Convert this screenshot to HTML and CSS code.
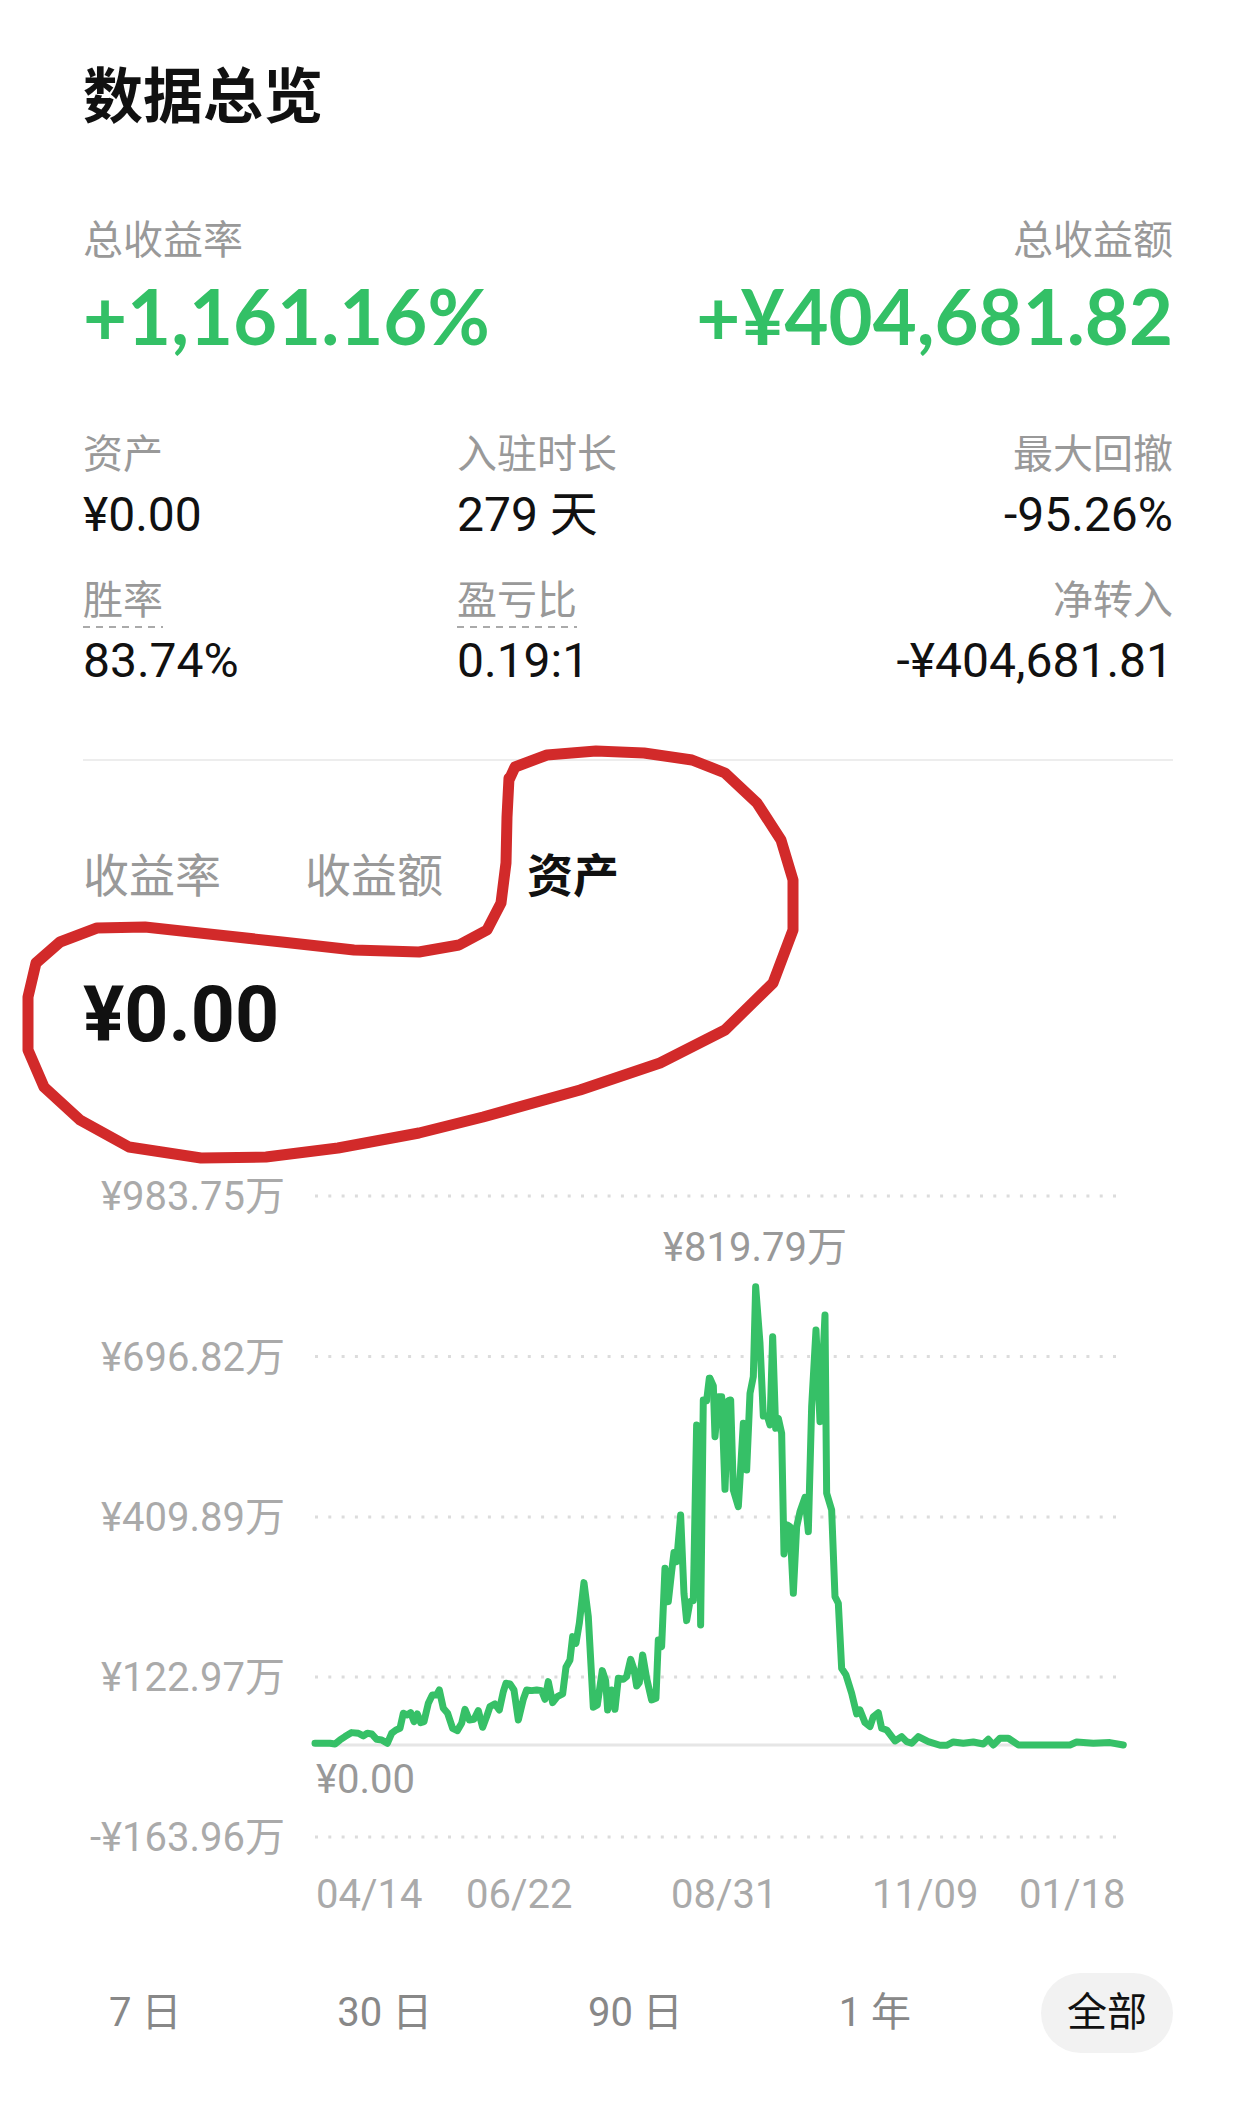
FILE: index.html
```html
<!DOCTYPE html>
<html lang="zh-CN">
<head>
    <meta charset="UTF-8">
    <meta name="viewport" content="width=device-width, initial-scale=1.0">
    <title>数据总览</title>
    <link rel="stylesheet" href="styles.css">
</head>
<body>
    <div class="page">
        <h1 class="title">数据总览</h1>

        <!-- Headline numbers -->
        <div class="summary">
            <div class="summary-item">
                <div class="label">总收益率</div>
                <div class="big-num up">+1,161.16%</div>
            </div>
            <div class="summary-item right">
                <div class="label">总收益额</div>
                <div class="big-num up">+¥404,681.82</div>
            </div>
        </div>

        <!-- Detail stats -->
        <div class="stats">
            <div class="stat">
                <div class="label">资产</div>
                <div class="value">¥0.00</div>
            </div>
            <div class="stat">
                <div class="label">入驻时长</div>
                <div class="value">279 天</div>
            </div>
            <div class="stat right">
                <div class="label">最大回撤</div>
                <div class="value">-95.26%</div>
            </div>
            <div class="stat">
                <div class="label"><span class="hint">胜率</span></div>
                <div class="value">83.74%</div>
            </div>
            <div class="stat">
                <div class="label"><span class="hint">盈亏比</span></div>
                <div class="value">0.19:1</div>
            </div>
            <div class="stat right">
                <div class="label">净转入</div>
                <div class="value">-¥404,681.81</div>
            </div>
        </div>

        <div class="divider"></div>

        <!-- Chart tabs -->
        <div class="tabs">
            <span class="tab">收益率</span>
            <span class="tab">收益额</span>
            <span class="tab active">资产</span>
        </div>
        <div class="current-value">¥0.00</div>

        <!-- Asset chart, drawn in page coordinates -->
        <svg class="chart" width="1090" height="790" viewBox="83 1150 1090 790">
            <g class="grid">
                <line x1="315" y1="1196" x2="1117" y2="1196"/>
                <line x1="315" y1="1356.5" x2="1117" y2="1356.5"/>
                <line x1="315" y1="1517" x2="1117" y2="1517"/>
                <line x1="315" y1="1677" x2="1117" y2="1677"/>
                <line x1="315" y1="1837" x2="1117" y2="1837"/>
            </g>
            <line class="zero-line" x1="315" y1="1745" x2="1123" y2="1745"/>

            <g class="axis-y">
                <text x="285" y="1210">¥983.75万</text>
                <text x="285" y="1370.5">¥696.82万</text>
                <text x="285" y="1531">¥409.89万</text>
                <text x="285" y="1691">¥122.97万</text>
                <text x="285" y="1851">-¥163.96万</text>
            </g>

            <g transform="translate(310 1260) scale(0.3333)">
                <polyline class="line" points="15,1450 60,1450 75,1452 90,1440 105,1430 125,1418 145,1420 160,1428 172,1420 185,1422 200,1438 215,1440 232,1450 245,1420 258,1410 270,1405 280,1360 292,1365 302,1358 312,1385 322,1362 332,1388 342,1385 355,1330 367,1305 380,1305 388,1290 400,1345 413,1360 428,1405 442,1412 455,1390 465,1348 478,1380 492,1378 505,1352 518,1402 530,1370 540,1340 555,1332 568,1350 580,1295 588,1270 600,1272 612,1290 625,1380 640,1318 650,1290 665,1292 680,1290 695,1292 705,1318 715,1265 728,1328 742,1310 758,1302 768,1222 780,1200 788,1130 798,1150 808,1090 822,968 835,1070 850,1342 862,1335 877,1232 887,1262 893,1350 905,1290 915,1348 925,1255 940,1258 950,1250 962,1198 972,1228 980,1278 988,1268 998,1185 1010,1255 1025,1320 1038,1315 1045,1140 1055,1160 1065,925 1075,1025 1085,935 1092,878 1100,905 1112,765 1122,1000 1130,1082 1140,1025 1150,1022 1160,495 1166,500 1172,1095 1180,420 1190,422 1198,355"/>
            </g>
            <g transform="translate(710 1260) scale(0.3333)">
                <polyline class="line" points="0,355 10,378 15,530 25,410 35,410 45,688 55,422 62,420 70,690 85,740 100,490 110,630 120,400 130,350 137,80 150,250 160,468 172,468 180,495 188,230 197,505 205,475 215,520 222,882 232,795 240,800 250,1000 260,800 270,755 285,712 295,815 305,440 318,210 330,485 345,165 350,700 365,750 375,1010 385,1030 395,1225 408,1245 425,1300 440,1362 450,1350 465,1388 480,1400 490,1370 505,1358 515,1405 530,1410 555,1443 575,1430 590,1445 605,1450 625,1430 655,1445 690,1456 710,1456 730,1446 760,1450 790,1446 820,1452 835,1438 850,1455 870,1435 895,1435 925,1455 1080,1455 1100,1446 1150,1450 1200,1448 1240,1455"/>
            </g>

            <text class="mark" x="755" y="1261" text-anchor="middle">¥819.79万</text>
            <text class="mark" x="316" y="1793">¥0.00</text>

            <g class="axis-x">
                <text x="316" y="1908">04/14</text>
                <text x="466" y="1908">06/22</text>
                <text x="671" y="1908">08/31</text>
                <text x="872" y="1908">11/09</text>
                <text x="1019" y="1908">01/18</text>
            </g>
        </svg>

        <!-- Range selector -->
        <div class="ranges">
            <span class="range">7 日</span>
            <span class="range">30 日</span>
            <span class="range">90 日</span>
            <span class="range">1 年</span>
            <span class="range active">全部</span>
        </div>
    </div>

    <!-- hand-drawn red marker over the screenshot -->
    <svg class="annotation" width="1256" height="2106" viewBox="0 0 1256 2106">
        <polyline points="509,780 515,767 547,755 596,751 644,753 692,760 725,773 757,803 781,840 793,880 793,930 773,983 725,1030 660,1063 580,1090 483,1117 419,1133 338,1148 266,1157 201,1158 129,1147 80,1120 44,1087 28,1050 28,997 36,963 60,942 97,928 145,927 209,934 282,942 354,950 419,952 459,945 487,930 501,903 506,863 507,817 509,778"/>
    </svg>
</body>
</html>
```

FILE: styles.css
```css
body {
    margin: 0;
    background-color: #fff;
    color: #111;
    font-family: Roboto, "Noto Sans CJK SC", sans-serif;
}
.page {
    position: relative;
    padding: 52px 83px 0;
}
.title {
    margin: 0;
    font-family: "Noto Sans CJK SC", sans-serif;
    font-size: 60px;
    font-weight: 700;
    line-height: 80px;
}
.label {
    font-family: "Noto Sans CJK SC", sans-serif;
    font-size: 40px;
    line-height: 56px;
    height: 56px;
    color: #999;
}
.summary {
    display: flex;
    justify-content: space-between;
    margin-top: 77px;
}
.right {
    text-align: right;
}
.big-num {
    margin-top: 6px;
    font-family: Lato, Roboto, sans-serif;
    font-size: 76px;
    font-weight: 700;
    line-height: 90px;
}
.up {
    color: #33c066;
}
.stats {
    display: grid;
    grid-template-columns: 374px 1fr auto;
    row-gap: 24px;
    margin-top: 62px;
}
.value {
    margin-top: 6px;
    font-size: 48px;
    line-height: 60px;
    color: #111;
}
.hint {
    display: inline-block;
    height: 59px;
    background: linear-gradient(to right, #aaa 7px, transparent 7px) left bottom / 13px 2px repeat-x;
}
.divider {
    margin-top: 68px;
    border-top: 2px solid #ededed;
}
.tabs {
    display: flex;
    gap: 84px;
    margin-top: 81px;
    font-family: "Noto Sans CJK SC", sans-serif;
    font-size: 46px;
    line-height: 60px;
    color: #999;
}
.tab.active {
    color: #111;
    font-weight: 700;
}
.current-value {
    margin-top: 68px;
    font-size: 77px;
    font-weight: 700;
    line-height: 90px;
}
.chart {
    display: block;
    margin-top: 90px;
    font-family: Roboto, "Noto Sans CJK SC", sans-serif;
    font-size: 40px;
}
.chart .grid line {
    stroke: #dcdcdc;
    stroke-width: 3;
    stroke-dasharray: 3 10.3;
}
.chart .zero-line {
    stroke: #e6e6e6;
    stroke-width: 3;
}
.chart .axis-y text {
    fill: #aaa;
    text-anchor: end;
}
.chart .axis-x text {
    fill: #aaa;
}
.chart .mark {
    fill: #999;
}
.chart .line {
    fill: none;
    stroke: #36c067;
    stroke-width: 21;
    stroke-linejoin: round;
    stroke-linecap: round;
}
.ranges {
    display: flex;
    justify-content: space-between;
    margin-top: 33px;
}
.range {
    padding: 0 26px;
    height: 80px;
    line-height: 80px;
    font-size: 40px;
    color: #888;
    border-radius: 40px;
}
.range.active {
    background-color: #f2f2f2;
    color: #111;
}
.annotation {
    position: absolute;
    top: 0;
    left: 0;
    pointer-events: none;
}
.annotation polyline {
    fill: none;
    stroke: #d22a2a;
    stroke-width: 11;
    stroke-linejoin: round;
    stroke-linecap: round;
}
```
